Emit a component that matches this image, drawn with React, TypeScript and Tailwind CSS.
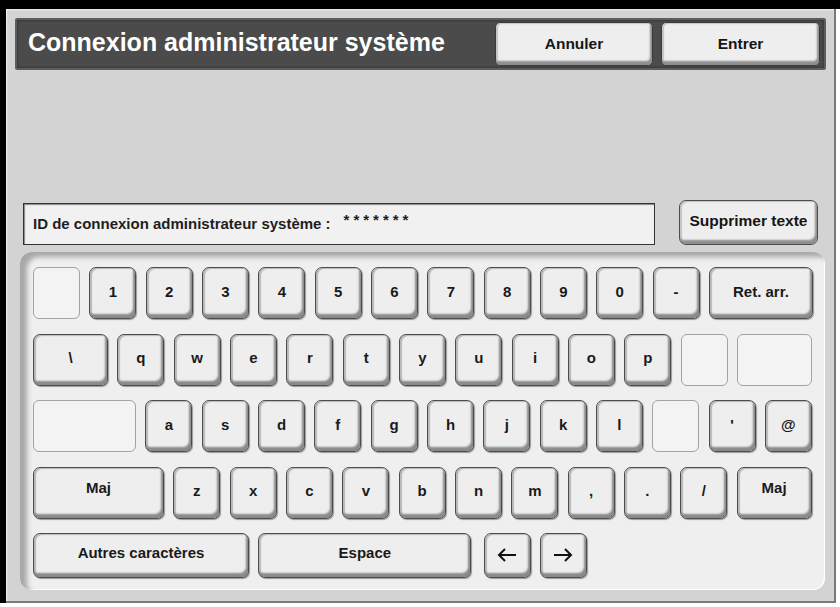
import { ReactNode } from "react";

type KeyDef = { label?: ReactNode; w: string; blank?: boolean; extra?: string };

const font = { fontFamily: '"Liberation Sans", Arial, sans-serif' };

// keyboard rows, widths follow a 47px key unit with 9.33px gaps
const rows: KeyDef[][] = [
  [
    { w: "w-[47px]", blank: true },
    ...["1", "2", "3", "4", "5", "6", "7", "8", "9", "0", "-"].map((k) => ({ label: k, w: "w-[47px]" })),
    { label: "Ret. arr.", w: "w-[104px]" },
  ],
  [
    { label: "\\", w: "w-[75px]" },
    ...["q", "w", "e", "r", "t", "y", "u", "i", "o", "p"].map((k) => ({ label: k, w: "w-[47px]" })),
    { w: "w-[47px]", blank: true },
    { w: "w-[75px]", blank: true },
  ],
  [
    { w: "w-[103px]", blank: true },
    ...["a", "s", "d", "f", "g", "h", "j", "k", "l"].map((k) => ({ label: k, w: "w-[47px]" })),
    { w: "w-[47px]", blank: true },
    { label: "'", w: "w-[47px]" },
    { label: "@", w: "w-[47px]" },
  ],
  [
    { label: "Maj", w: "w-[131px]", extra: "pb-[8px]" },
    ...["z", "x", "c", "v", "b", "n", "m", ",", ".", "/"].map((k) => ({ label: k, w: "w-[47px]" })),
    { label: "Maj", w: "w-[75px]", extra: "pb-[8px]" },
  ],
];

function Arrow({ left }: { left?: boolean }) {
  return (
    <svg width="20" height="14" viewBox="0 0 20 14" className={left ? "" : "rotate-180"}>
      <path d="M19 7H2M8 1L2 7l6 6" fill="none" stroke="#111" strokeWidth="2" />
    </svg>
  );
}

function Key({ k, h = "h-[52px]" }: { k: KeyDef; h?: string }) {
  if (k.blank) {
    return <div className={`${k.w} ${h} shrink-0 rounded-[6px] border border-[#a3a3a3] bg-[#f3f3f3]`} />;
  }
  return (
    <div
      className={`${k.w} ${h} ${k.extra ?? "pb-[2px]"} shrink-0 flex items-center justify-center rounded-[7px] border border-[#4c4c4c] bg-[#eeeeee] text-[15px] font-bold text-[#1a1a1a] shadow-[inset_-2px_-4px_2px_#8a8a8a,inset_2px_1px_1px_#b8b8b8,1px_1px_1px_#9a9a9a]`}
    >
      {k.label}
    </div>
  );
}

function TopButton({ children, w }: { children: ReactNode; w: string }) {
  return (
    <div
      className={`${w} h-[44px] shrink-0 flex justify-center pt-[9px] rounded-[5px] border border-[#3a3a3a] bg-[#eeeeee] text-[15.5px] font-bold text-[#151515] shadow-[inset_-2px_-4px_2px_#8e8e8e,inset_2px_1px_1px_#c4c4c4]`}
    >
      {children}
    </div>
  );
}

export default function App() {
  return (
    <div className="w-[840px] h-[607px] bg-white flex flex-col overflow-hidden" style={font}>
      <div className="h-[9px] bg-black shrink-0" />
      <div className="flex flex-1">
        <div className="w-[6px] h-[594px] bg-black shrink-0" />
        <div className="w-[830px] h-[594px] bg-[#d3d3d3] border-r-2 border-b-2 border-[#7a7a7a] flex flex-col px-[9px] pt-[9px] shadow-[inset_1px_1px_2px_#f0f0f0]">
          {/* title bar */}
          <div className="w-[811px] h-[52px] shrink-0 flex items-center rounded-[2px] bg-[#4b4b4b] border-2 border-[#5e5e5e] shadow-[inset_0_0_3px_#2a2a2a] pl-[11px] pr-[4px]">
            <div className="flex-1 text-white text-[25px] font-bold pb-[2px]">
              Connexion administrateur système
            </div>
            <div className="flex gap-[8px] items-center">
              <TopButton w="w-[158px]">Annuler</TopButton>
              <TopButton w="w-[159px]">Entrer</TopButton>
            </div>
          </div>

          {/* id field */}
          <div className="flex items-end mt-[130px] ml-[8px] h-[45px] shrink-0">
            <div className="w-[632px] h-[42px] flex items-center pl-[9px] border border-[#333] bg-[#f1f1f1] shadow-[inset_1px_1px_1px_#888]">
              <span className="text-[15px] font-bold text-[#1e1e1e]">ID de connexion administrateur système :</span>
              <span className="ml-[13px] mb-[7px] text-[15px] font-bold text-[#1e1e1e] tracking-[4px]">*******</span>
            </div>
            <div className="ml-[24px] w-[139px] h-[45px] flex items-center justify-center pb-[4px] rounded-[7px] border border-[#4c4c4c] bg-[#eeeeee] text-[15.5px] font-bold text-[#151515] shadow-[inset_-2px_-4px_2px_#8e8e8e,inset_2px_1px_1px_#c4c4c4]">
              Supprimer texte
            </div>
          </div>

          {/* keyboard panel */}
          <div className="mt-[7px] ml-[5px] w-[805px] h-[338px] shrink-0 rounded-[12px] bg-[#efefef] shadow-[inset_7px_5px_5px_#a8a8a8,inset_-1px_-1px_1px_#ffffff] pl-[13px] pt-[15px] flex flex-col gap-[14.5px]">
            {rows.map((row, i) => (
              <div key={i} className="flex gap-[9.33px]">
                {row.map((k, j) => (
                  <Key key={j} k={k} />
                ))}
              </div>
            ))}
            <div className="flex gap-[9.33px]">
              <Key k={{ label: "Autres caractères", w: "w-[216px]", extra: "pb-[4px]" }} h="h-[45px]" />
              <Key k={{ label: "Espace", w: "w-[213px]", extra: "pb-[4px]" }} h="h-[45px]" />
              <div className="ml-[3px]">
                <Key k={{ label: <Arrow left />, w: "w-[47px]", extra: "pb-[2px]" }} h="h-[45px]" />
              </div>
              <Key k={{ label: <Arrow />, w: "w-[47px]", extra: "pb-[2px]" }} h="h-[45px]" />
            </div>
          </div>
        </div>
      </div>
    </div>
  );
}
